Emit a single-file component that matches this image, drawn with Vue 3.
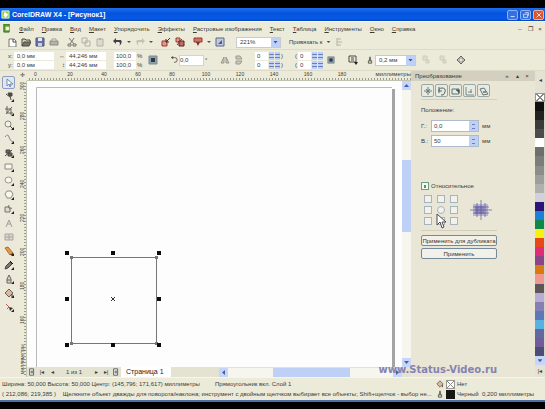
<script setup>
import { h, ref } from 'vue'

const K = '#4b4b46'
const G = '#b3b2a4'
const R = '#a5362f'

// Each glyph is a list of [path, fill, stroke] on a 10 × 10 grid.
const glyphs = {
  app: [['M1 1h8v8H1z', '#8ed04c', '#e8f6d0'], ['M4 2l4 3-3 4-2-3z', '#fff', 'none']],
  doc: [['M2 0h6v9H2z', '#5aa02c', '#3f6f20'], ['M4 3h4v4H4z', '#f4f8e0', 'none']],
  new: [['M2 2h5l2 2v6H2z', '#fff', '#77766c'], ['M6 2v3h3', 'none', K]],
  open: [['M1 9V2h3l1 1h4v2', '#d8cf9c', K], ['M1 9l2-4h7L8 9z', '#77756a', K]],
  save: [['M1 1h8v8H1z', '#6672a8', '#4b5480'], ['M3 1h4v3H3z', '#e6e8f2', 'none'], ['M3 6h4v3H3z', '#c9cde0', 'none']],
  print: [['M1 4h8v4H1z', '#b5b4ac', '#8b8a82'], ['M3 2h4v2H3z', '#fff', '#9b9a92']],
  cut: [['M2 1l5 6M7 1L3 7', 'none', '#77766f'], ['M1 7h3v2H1zM6 7h3v2H6z', 'none', '#77766f']],
  copy: [['M1 1h5v5H1zM4 4h5v5H4z', '#eceadd', G]],
  paste: [['M2 2h6v7H2z', '#dddbcf', G], ['M4 1h2v2H4z', G, 'none']],
  undo: [['M3 1L0 4l3 3V5h3q2 1 0 4 4-3 2-6H3z', '#3c3f4c', 'none']],
  redo: [['M7 1l3 3-3 3V5H4q-2 1 0 4-4-3-2-6h5z', '#c4c2b4', 'none']],
  import: [['M1 4h5v5H1z', '#d69a8e', R], ['M9 1L5 5M5 2v3h3', 'none', '#5c2020']],
  export: [['M1 1h4v4H1z', '#d69a8e', R], ['M4 4h5v5H4z', '#c86a5e', '#5c2020'], ['M2 8l5-6', 'none', K]],
  launch: [['M1 1h8v4H1z', '#c9736b', R], ['M3 5h4L5 9z', '#7b2f2f', 'none']],
  welcome: [['M1 1h8v8H1z', '#c4cade', '#5b6790'], ['M3 7l4-4v4z', '#4b5a8c', 'none']],
  options: [['M2 1v8M2 2h4M2 5h5M2 8h4', 'none', G]],
  lock: [['M1 1h8v8H1z', '#8fa0a8', '#7b8b94'], ['M3 3h4v4H3z', '#2d3a44', 'none']],
  rotate: [['M3 2h3q3 0 3 3t-4 3', 'none', K], ['M4 0v4L1 2z', K, 'none']],
  mirrorH: [['M1 8l3-6v6zM9 8L6 2v6z', '#cccabd', '#9a998e']],
  mirrorV: [['M2 1h4l2 3H2zM2 9h4l2-3H2z', '#cccabd', '#9a998e']],
  wrap: [['M1 1h7v6H1zM3 3h3M3 5h3', 'none', K], ['M6 7h4L8 10z', '#222', 'none']],
  pen: [['M3 9h4V6H3zM4 6l1-5 1 5', '#d8d6ca', K]],
  order: [['M2 1h4v4H2zM5 5h3v3H5z', '#dfdccd', '#cfccbd']],
  curve: [['M5 1l4 4-4 4-4-4z', '#e9e7d9', '#66655d'], ['M3 3h4v4H3z', 'none', '#8b8a80']],
  pick: [['M3 1v7l2-2 1 3 1-1-1-2h3z', '#fff', '#7889a8']],
  shape: [['M2 2l4 3', 'none', K], ['M4 1h4v3H5zM6 4l1 4', K, K]],
  crop: [['M3 0v7h6M1 3h6v6M2 8l6-7', 'none', '#65635b']],
  zoom: [['M1 4a3 3 0 1 0 6 0a3 3 0 1 0-6 0', '#f3f2e8', '#8b8a80'], ['M6 6l3 3', 'none', K]],
  free: [['M1 3q3-4 4 0t4 5', 'none', '#87867c']],
  smart: [['M2 2h4v3H2zM4 5h4v3H4z', '#66645c', K], ['M1 8l7-6', 'none', K]],
  rect: [['M1 2h7v5H1z', '#f8f7ee', '#8b8a80']],
  ellipse: [['M1 4a3.5 3 0 1 0 7 0a3.5 3 0 1 0-7 0', '#f8f7ee', '#99988e']],
  polygon: [['M3 1h4l2 3-2 4H3L1 4z', '#f8f7ee', '#8b8a80']],
  basic: [['M1 3h5v5H1z', '#dddbd0', '#77766c'], ['M5 1a2 2 0 1 0 3 3', 'none', '#77766c']],
  text: [['M2 9l3-7 3 7M3 6h4', 'none', '#a09f95']],
  table: [['M1 2h8v6H1zM1 5h8M5 2v6', '#d8d6ce', '#aaa9a0']],
  blend: [['M1 2l3-1 5 6-3 2z', '#e49a4a', '#a8702c'], ['M6 9l3-2v2z', '#333', 'none']],
  dropper: [['M1 9l1-3 4-4 2 2-4 4z', '#777', K], ['M6 1l3 3', 'none', '#111']],
  outline: [['M3 9h4V5L5 1 3 5zM3 6h4', '#d9d7c8', '#66655d']],
  fill: [['M1 5l4-4 4 4-4 4z', '#d9b9a0', '#6d5f52'], ['M8 6v3', 'none', '#333']],
  interactive: [['M2 2l3 3-2 2', 'none', '#b6675b'], ['M5 5l4 1-3 3z', '#333', 'none']],
  move: [['M1 5h8M5 1v8M3 3l4 4M7 3L3 7', 'none', '#6b7f80']],
  turn: [['M2 7q-1-5 3-5t3 4-4 3M2 1v4h3', 'none', '#4f6466']],
  scale: [['M1 3h7v5H1z', 'none', '#5f7375'], ['M5 4h3v3', '#4c5c60', K]],
  size: [['M1 1v8h8M3 6h4M6 3v4', 'none', '#73898a']],
  skew: [['M1 3l4-1 4 6-5 1z', 'none', '#5f7375'], ['M4 5h3v2H4z', '#829092', 'none']],
  max: [['M2 4h5v4H2zM4 2h4v4', 'none', '#dfe9ff']],
  min: [['M2 7h5', 'none', '#fff']],
  close: [['M2 2l6 6M8 2L2 8', 'none', '#fff']],
  add: [['M2 1h5v8H2zM3 5h3M5 3v4', '#eee', K]]
}

const Glyph = (props) =>
  h('svg', { viewBox: '0 0 10 10', width: props.size || 10, height: props.size || 10, 'aria-hidden': 'true' },
    glyphs[props.name].map(([d, fill, stroke]) => h('path', { d, fill, stroke })))
Glyph.props = ['name', 'size']

const menus = ['Файл', 'Правка', 'Вид', 'Макет', 'Упорядочить', 'Эффекты', 'Растровые изображения', 'Текст', 'Таблица', 'Инструменты', 'Окно', 'Справка']
const groups = [
  ['new', 'open', 'save', 'print'],
  ['cut', 'copy', 'paste'],
  ['undo', '▾', 'redo', '▾'],
  ['import', 'export'],
  ['launch', '▾', 'welcome']
]
const tools = ['pick', 'shape', 'crop', 'zoom', 'free', 'smart', 'rect', 'ellipse', 'polygon', 'basic', 'text', 'table', 'blend', 'dropper', 'outline', 'fill', 'interactive']
const plain = ['pick', 'text', 'table']
const across = ['0', '20', '40', '60', '80', '100', '120', '140', '160', '180']
const down = ['300', '280', '260', '240', '220', '200', '180', '160']
const transforms = ['move', 'turn', 'scale', 'size', 'skew']
const swatches = ['#10100f', '#222220', '#3a3a38', '#4c4c4a', '#ffffff', '#6e6e6c', '#7c7c7a', '#8c8c8a', '#9e9e9c', '#b0b0ae', '#d2d0d8',
  '#2c1478', '#1c80d8', '#108848', '#f8f010', '#e84818', '#e02c78', '#8c4488', '#d87a10', '#f09890', '#5c5658', '#b8acd4', '#8480b4', '#5c78b8', '#58b0e4', '#6468a0', '#705c98', '#4c4c74']
const handles = [[67, 253], [113, 253], [159, 253], [67, 299], [159, 299], [67, 345], [113, 345], [159, 345]]

const posH = ref('0,0')
const posV = ref('50')
const relative = ref(true)
</script>

<template>
  <div class="screen">
    <header class="title">
      <Glyph name="app" size="9" />
      <h1>CorelDRAW X4 - [Рисунок1]</h1>
      <button class="win" aria-label="Свернуть"><Glyph name="min" size="8" /></button>
      <button class="win" aria-label="Восстановить"><Glyph name="max" size="8" /></button>
      <button class="win red" aria-label="Закрыть"><Glyph name="close" size="8" /></button>
    </header>

    <nav class="menu">
      <Glyph name="doc" size="9" />
      <a v-for="m in menus" :key="m" href="#"><u>{{ m[0] }}</u>{{ m.slice(1) }}</a>
      <span class="mdi"><button>–</button><button>❐</button><button>×</button></span>
    </nav>

    <div class="bar standard">
      <div v-for="(g, i) in groups" :key="i" class="group">
        <template v-for="(n, j) in g" :key="j">
          <span v-if="n === '▾'" class="caret"></span>
          <button v-else :aria-label="n"><Glyph :name="n" /></button>
        </template>
      </div>
      <label class="combo scale"><select aria-label="Масштаб"><option>221%</option></select><i></i></label>
      <div class="group"><button>Привязать к</button><span class="caret"></span><button aria-label="Параметры"><Glyph name="options" /></button></div>
    </div>

    <div class="bar property">
      <div class="pair">
        <label>x:<input value="0,0 мм"></label>
        <label>y:<input value="0,0 мм"></label>
      </div>
      <div class="pair">
        <label><b>↔</b><input value="44,246 мм"></label>
        <label><b>↕</b><input value="44,246 мм"></label>
      </div>
      <div class="pair percent">
        <label><input value="100,0">%</label>
        <label><input value="100,0">%</label>
      </div>
      <button class="ratio" aria-label="Сохранять пропорции"><Glyph name="lock" /></button>
      <label class="angle"><Glyph name="rotate" size="8" /><input value="0,0">°</label>
      <button aria-label="Отразить по горизонтали"><Glyph name="mirrorH" /></button>
      <button aria-label="Отразить по вертикали"><Glyph name="mirrorV" /></button>
      <div class="pair round">
        <label v-for="n in 2" :key="n"><input value="0" aria-label="Скругление слева"><s></s><s></s>)</label>
      </div>
      <div class="pair round">
        <label v-for="n in 2" :key="n">(<input value="0" aria-label="Скругление справа"><s></s><s></s></label>
      </div>
      <button aria-label="Скруглять вместе"><Glyph name="lock" size="8" /></button>
      <button aria-label="Обтекание"><Glyph name="wrap" /></button>
      <div class="width">
        <Glyph name="pen" size="8" />
        <label class="combo"><select aria-label="Толщина абриса"><option>0,2 мм</option></select><i></i></label>
      </div>
      <button aria-label="На передний план"><Glyph name="order" /></button>
      <button aria-label="На задний план"><Glyph name="order" /></button>
      <button aria-label="Преобразовать в кривую"><Glyph name="curve" /></button>
    </div>

    <main class="body">
      <aside class="toolbox">
        <button v-for="t in tools" :key="t" :class="{ active: t === 'pick', fly: !plain.includes(t) }" :aria-label="t"><Glyph :name="t" /></button>
      </aside>

      <section class="work">
        <div class="corner">✛</div>
        <div class="ruler-x"><span v-for="n in across" :key="n">{{ n }}</span><em>миллиметры</em></div>
        <div class="ruler-y"><span v-for="n in down" :key="n">{{ n }}</span><em>миллиметры</em></div>
        <div class="canvas">
          <svg viewBox="27 81 375 287" preserveAspectRatio="xMinYMin slice" aria-label="Рисунок">
            <path d="M36.500 368V87.500H392" fill="none" stroke="#b9b9bc" />
            <path d="M393.500 89V368" stroke="#a4a4a6" stroke-width="3" />
            <path d="M71.500 257.500H156.500V343.500H71.500Z" fill="#fdfdfd" stroke="#77777a" />
            <path d="M70 256h3v3h-3zM155 256h3v3h-3zM70 342h3v3h-3zM155 342h3v3h-3z" fill="#77777a" />
            <rect v-for="(p, i) in handles" :key="i" :x="p[0] - 2" :y="p[1] - 2" width="4" height="4" fill="#0c0c0c" />
            <path d="M111 297l4 4M115 297l-4 4" stroke="#333" />
          </svg>
        </div>
        <div class="vscroll"><button aria-label="Вверх" class="up"></button><div></div><button aria-label="Вниз"></button></div>
        <div class="pages">
          <button aria-label="Добавить страницу"><Glyph name="add" size="8" /></button>
          <button>|◂</button><button>◂</button>
          <span>1 из 1</span>
          <button>▸</button><button>▸|</button>
          <button aria-label="Добавить страницу в конец"><Glyph name="add" size="8" /></button>
          <a href="#" class="tab">Страница 1</a>
          <div class="hscroll"><button aria-label="Влево"></button><div></div><button aria-label="Вправо" class="right"></button></div>
        </div>
      </section>

      <aside class="docker">
        <header><h2>Преобразование</h2><button>»</button><button>▴</button><button>×</button></header>
        <form @submit.prevent>
          <div class="modes"><button v-for="t in transforms" :key="t" type="button" :aria-label="t"><Glyph :name="t" /></button></div>
          <p>Положение:</p>
          <div class="field"><label for="ph">Г.:</label><span><input id="ph" v-model="posH"><s></s></span>мм</div>
          <div class="field"><label for="pv">В.:</label><span><input id="pv" v-model="posV"><s></s></span>мм</div>
          <label class="check"><input v-model="relative" type="checkbox">Относительное</label>
          <div class="anchor">
            <div class="grid"><input v-for="n in 9" :key="n" type="checkbox" :class="{ mid: n === 5 }" :aria-label="'Точка ' + n"></div>
            <svg viewBox="0 0 22 20" width="22" height="20" aria-hidden="true">
              <path d="M3 4h15v12H3z" fill="#b9b4dc" /><path d="M5 6h9v8H5z" fill="#8e88c4" />
              <path d="M0 10h22M11 0v20M7 3v14M15 3v14M3 7h16M3 13h16" stroke="#5e5a86" stroke-width=".7" />
            </svg>
          </div>
          <button type="button" class="wide">Применить для дубликата</button>
          <button type="button" class="wide">Применить</button>
        </form>
        <svg class="cursor" viewBox="0 0 10 16" width="10" height="16" aria-hidden="true"><path d="M1 1v11l3-3 2 6 2-1-2-5h4z" fill="#fff" stroke="#4a4a50" /></svg>
      </aside>

      <aside class="palette">
        <button class="more">◂</button>
        <button class="none" aria-label="Нет цвета"></button>
        <button v-for="c in swatches" :key="c" class="swatch" :style="{ background: c }" :aria-label="c"></button>
        <button class="next" aria-label="Далее"></button>
        <button class="flip">|◂</button>
      </aside>
      <div class="mark">www.Status-Video.ru</div>
    </main>

    <footer class="status">
      <div class="line">
        <span>Ширина: 50,000 Высота: 50,000 Центр: (145,796; 171,617) миллиметры</span>
        <span>Прямоугольник вкл. Слой 1</span>
        <span class="ink"><Glyph name="fill" size="8" /><i class="none"></i>Нет</span>
      </div>
      <div class="line">
        <span class="hint">( 212,086; 219,385 )&nbsp;&nbsp;&nbsp; Щелкните объект дважды для поворота/наклона; инструмент с двойным щелчком выбирает все объекты; Shift+щелчок - выбор не...</span>
        <span class="ink"><Glyph name="pen" size="8" /><i class="black"></i>Черный&nbsp; 0,200 миллиметры</span>
      </div>
    </footer>
  </div>
</template>

<style>
body { background: #000; }
</style>

<style scoped>
* { box-sizing: border-box; }
.screen { display: flex; flex-direction: column; min-height: 100vh; padding: 8px 0 7px; background: #000; color: #3c3b36; font: 6px/8px "Liberation Sans", sans-serif; white-space: nowrap; overflow: hidden; }
button, input, select { font: inherit; color: inherit; margin: 0; padding: 0; border: 0; background: none; border-radius: 0; min-width: 0; }
button { display: grid; place-items: center; flex: none; }
a { color: inherit; text-decoration: none; }
svg { display: block; flex: none; }
h1, h2, p { margin: 0; font-size: inherit; font-weight: normal; }

.title { display: flex; align-items: center; gap: 2px; height: 13px; padding: 0 1px; background: linear-gradient(#1c70ee, #0553dc 40%, #0759e6 80%, #0648bc); color: #fff; }
h1 { flex: 1; font-size: 7px; font-weight: bold; }
.win { width: 11px; height: 10px; border: 1px solid #8bb2f4; border-radius: 2px; background: #3670e0; }
.win.red { background: #d8562e; border-color: #eeb09c; }

.menu { display: flex; align-items: center; gap: 8px; height: 14px; padding: 0 2px; background: #ecead8; border-top: 1px solid #f8f6e6; }
.mdi { display: flex; gap: 4px; margin-left: auto; }
.mdi button { width: 6px; }

.bar { display: flex; align-items: center; background: #ecead9; border-bottom: 1px solid #dddbc8; }
.standard { height: 15px; gap: 8px; padding-left: 7px; }
.group { display: flex; align-items: center; gap: 4px; }
.caret { width: 4px; height: 2px; background: #55534b; clip-path: polygon(0 0, 100% 0, 50% 100%); }
.combo { display: flex; height: 11px; background: #fff; border: 1px solid #c6cbd0; }
.combo select { flex: 1; appearance: none; padding-left: 3px; }
.combo i { display: grid; place-items: center; width: 9px; background: #bfd0f8; }
.combo i::after { content: ""; width: 5px; height: 3px; background: #44588c; clip-path: polygon(0 0, 100% 0, 50% 100%); }
.scale { width: 45px; margin-left: 3px; }

.property { display: grid; grid-template-columns: 48px 49px 36px 19px 55px 13px 20px 39px 31px 20px 17px 54px 16px 17px 10px; height: 21px; gap: 0 1px; padding: 0 8px; }
.property > button { justify-self: start; }
.pair { display: grid; gap: 1px; }
.pair label, .angle { display: flex; align-items: center; gap: 1px; }
.pair input { width: 40px; height: 8px; padding-left: 3px; background: #fff; }
.pair b { width: 8px; text-align: right; }
.pair.percent input { width: 22px; padding-left: 2px; }
.percent { margin-left: 7px; }
.ratio { margin-left: 4px; }
.angle { margin-left: 6px; }
.angle input { width: 25px; height: 11px; background: #fff; border: 1px solid #d4d4cc; }
.pair.round input { width: 13px; padding-left: 2px; }
.round s { width: 5px; height: 8px; background: linear-gradient(#bfd0f8 2px, #6a80b8 2px 3px, #bfd0f8 3px 5px, #6a80b8 5px 6px, #bfd0f8 6px); }
.width { display: flex; align-items: center; gap: 1px; }
.width .combo { width: 41px; }

.body { position: relative; display: flex; flex: 1; background: #ecead9; }
.toolbox { display: flex; flex-direction: column; gap: 1px; width: 18px; padding: 5px 3px 0 2px; background: #ece9da; }
.toolbox button { position: relative; height: 13px; }
.toolbox .active { border: 1px solid #8c9fc0; border-radius: 2px; background: #e2e6ee; }
.toolbox .fly::after { content: ""; position: absolute; right: 1px; bottom: 1px; width: 3px; height: 3px; background: #222; clip-path: polygon(100% 0, 100% 100%, 0 100%); }

.work { display: grid; flex: 1; min-width: 0; grid-template: 10px 1fr 10px / 9px 1fr 9px; font-size: 5px; }
.corner { text-align: center; line-height: 9px; font-size: 6px; }
.ruler-x { grid-column: 2 / 4; display: flex; align-items: flex-start; border-bottom: 1px solid #c2c0ae; background: repeating-linear-gradient(90deg, transparent 0 2px, #9c9b8c 2px 3px) 0 100% / 100% 2px no-repeat; overflow: hidden; line-height: 7px; }
.ruler-x span { width: 34px; flex: none; text-align: center; }
.ruler-x span:first-child { width: 17px; margin-right: 9px; }
.ruler-x em { flex: 1; text-align: right; font-style: normal; font-size: 6px; }
.ruler-y { grid-row: 2 / 4; display: flex; flex-direction: column; min-height: 0; border-right: 1px solid #c2c0ae; background: repeating-linear-gradient(transparent 0 2px, #9c9b8c 2px 3px) 100% 0 / 2px 100% no-repeat; line-height: 7px; overflow: hidden; }
.ruler-y span, .ruler-y em { writing-mode: vertical-rl; transform: rotate(180deg); flex: none; height: 34px; text-align: center; font-style: normal; margin-left: 1px; }
.ruler-y span:first-child { height: 9px; margin-bottom: 9px; }
.ruler-y em { margin-top: auto; height: 36px; }
.canvas { background: #fdfdfd; min-height: 0; overflow: hidden; }
.canvas svg { width: 100%; height: 286px; }
.vscroll { display: flex; flex-direction: column; background: #f6f5ee; }
.vscroll div { height: 72px; margin: 70px 0 auto; background: #bed0f6; }
.vscroll button, .hscroll button, .next { height: 9px; width: 9px; background: #c6d5fa; }
.vscroll button::after, .hscroll button::after, .next::after { content: ""; width: 5px; height: 3px; background: #4b5f94; clip-path: polygon(0 0, 100% 0, 50% 100%); }
.vscroll .up::after { transform: rotate(180deg); }
.pages { grid-column: 2 / 4; display: flex; align-items: center; padding-right: 9px; background: #e4e2d0; font-size: 6px; }
.pages > button { width: 10px; }
.pages > span { width: 34px; text-align: center; }
.tab { height: 10px; padding: 1px 5px; width: 50px; background: #fff; font-size: 7px; color: #222; }
.hscroll { display: flex; flex: 1; height: 9px; margin-left: 48px; background: #f6f5ee; }
.hscroll div { width: 77px; margin: 0 auto 0 45px; background: #bed0f6; }
.hscroll button::after { transform: rotate(90deg); }
.hscroll .right::after { transform: rotate(-90deg); }

.docker { position: relative; width: 124px; background: #e9e6d6; }
.docker header { display: flex; align-items: center; height: 10px; padding: 0 3px 0 4px; background: #d3d0bf; }
.docker h2 { flex: 1; }
.docker header button { width: 10px; }
form { padding: 3px 38px 0 10px; }
.modes { display: flex; gap: 1px; padding-bottom: 2px; border-bottom: 1px solid #d2cfbd; }
.modes button { width: 13px; height: 13px; border: 1px solid #9aa9a4; border-radius: 2px; background: #e8ebe2; }
p { margin: 6px 0; }
.field { display: flex; align-items: center; margin-bottom: 3px; gap: 3px; }
.field label { width: 7px; }
.field span { display: flex; width: 48px; height: 12px; border: 1px solid #adbccb; background: #fff; }
.field input { flex: 1; padding-left: 2px; }
.field s { width: 9px; background: linear-gradient(#6a80b8, #6a80b8) 3px 3px / 3px 1px no-repeat, linear-gradient(#6a80b8, #6a80b8) 3px 7px / 3px 1px no-repeat, #bfd0f8; }
.check { display: flex; align-items: center; gap: 2px; margin-top: 35px; }
.check input, .grid input { appearance: none; width: 8px; height: 8px; border: 1px solid #6f9a88; background: #f5f8ef; }
.check input:checked { background: linear-gradient(#4b9c5a, #4b9c5a) 2px 2px / 2px 3px no-repeat, #f5f8ef; }
.anchor { display: flex; align-items: center; gap: 12px; padding: 5px 0 5px 3px; margin-bottom: 4px; border-bottom: 1px solid #d2cfbd; }
.grid { display: grid; grid-template-columns: repeat(3, 8px); gap: 3px 5px; }
.grid input { border-color: #a7b4bd; background: #f2f2ea; }
.grid .mid { border-radius: 4px; }
.wide { width: 100%; height: 11px; margin-bottom: 2px; border: 1px solid #75899c; border-radius: 2px; background: #f1f1ea; color: #333; }
.cursor { position: absolute; left: 25px; top: 142px; }

.palette { display: flex; flex-direction: column; width: 10px; background: #e4e2d2; }
.palette button { width: 100%; }
.more { height: 22px; padding-bottom: 4px; }
.none { height: 9px; border: 1px solid #99988e; background: linear-gradient(45deg, transparent 45%, #888 45% 55%, transparent 55%), linear-gradient(-45deg, transparent 45%, #888 45% 55%, transparent 55%), #fff; }
.swatch { flex: 1; border-right: 1px solid #d8d6c8; }
.flip { height: 12px; }
.mark { position: absolute; right: 48px; bottom: 0; color: #8583b0; font: bold 10px/14px "DejaVu Sans", sans-serif; }

.status { padding: 1px 2px; background: #ecead9; border-top: 1px solid #f8f6ea; border-bottom: 2px solid #4c6fa4; }
.line { display: grid; grid-template-columns: 213px 1fr 107px; align-items: center; height: 10px; }
.hint { grid-column: 1 / 3; overflow: hidden; }
.ink { display: flex; align-items: center; gap: 2px; }
.ink i { width: 9px; height: 9px; }
.black { background: #161614; }
</style>
